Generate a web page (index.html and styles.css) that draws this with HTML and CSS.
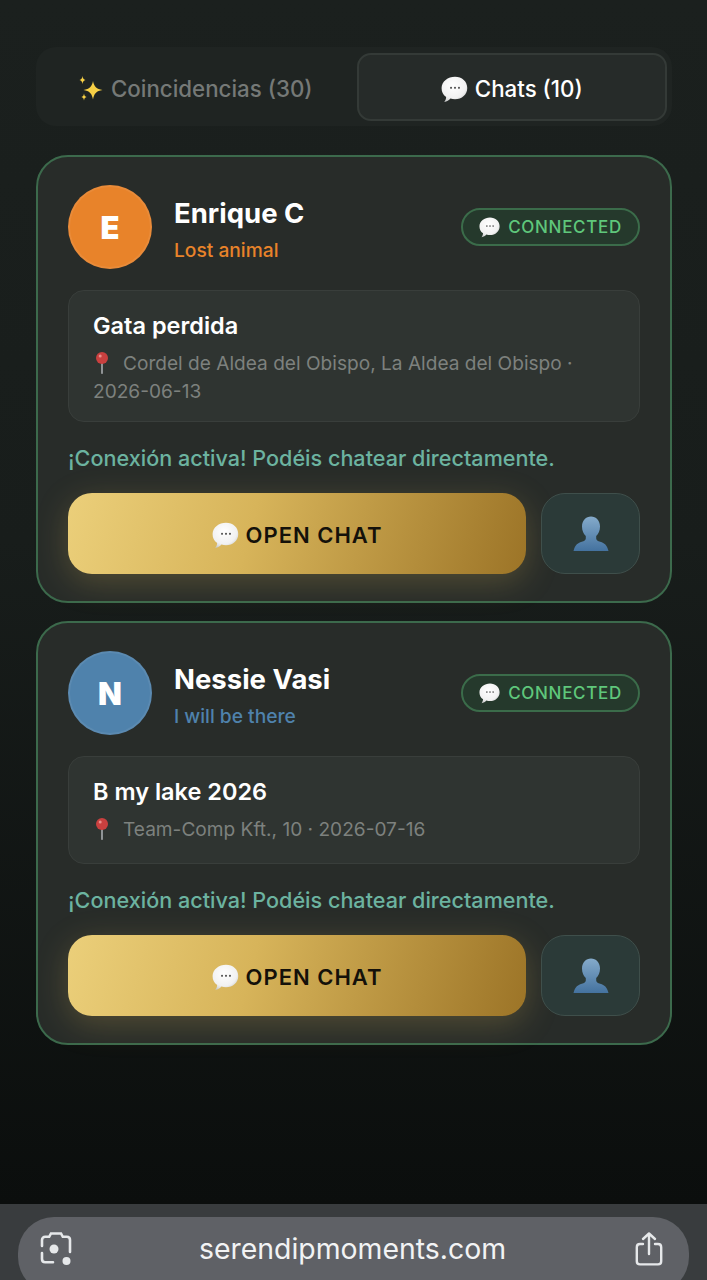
FILE: index.html
```html
<!DOCTYPE html>
<html lang="es">

<head>
  <meta charset="UTF-8">
  <meta name="viewport" content="width=device-width, initial-scale=1.0">
  <title>Chats</title>
  <link rel="stylesheet" href="styles.css">
</head>

<body>
  <svg class="defs" width="0" height="0" aria-hidden="true">
    <defs>
      <radialGradient id="bubble-fill" cx="45%" cy="35%" r="70%">
        <stop offset="0" stop-color="#ffffff" />
        <stop offset="0.7" stop-color="#f1f1f1" />
        <stop offset="1" stop-color="#c4c6c6" />
      </radialGradient>
      <linearGradient id="person-fill" x1="0" y1="0" x2="0" y2="1">
        <stop offset="0" stop-color="#85abcb" />
        <stop offset="1" stop-color="#44729f" />
      </linearGradient>
      <symbol id="bubble" viewBox="0 0 24 24">
        <path fill="url(#bubble-fill)" d="M12 1.500c6 0 10.500 4 10.500 9.700s-4.500 9.600-10.500 9.600c-1.400 0-2.700-.2-3.900-.6-1.300 1.400-3.100 2.500-5.300 3 1-1.300 1.500-2.600 1.600-4.300-2.800-1.800-3.900-4.500-3.900-7.700 0-5.700 5.500-9.700 11.500-9.700z" />
        <circle cx="8.600" cy="11" r=".9" fill="#555" />
        <circle cx="12" cy="11" r=".9" fill="#555" />
        <circle cx="15.400" cy="11" r=".9" fill="#555" />
      </symbol>
      <symbol id="sparkles" viewBox="0 0 26 28">
        <path fill="#f7d046" d="M15 6c1 5.500 3.500 8 9.500 9-6 1-8.500 3.500-9.500 9.500-1-6-3.500-8.500-9.500-9.500 6-1 8.500-3.500 9.500-9z" />
        <path fill="#f7d046" d="M4.500 1c.4 2.600 1.200 3.500 3 4-1.800.5-2.600 1.400-3 4-.4-2.600-1.200-3.500-3-4 1.800-.5 2.600-1.400 3-4z" />
        <path fill="#f7d046" d="M6 18.500c.4 2.300 1 3.100 2.600 3.500-1.600.4-2.200 1.200-2.600 3.500-.4-2.300-1-3.100-2.600-3.500 1.600-.4 2.200-1.200 2.600-3.500z" />
      </symbol>
      <symbol id="pin" viewBox="0 0 16 24">
        <rect x="7.200" y="9" width="1.600" height="14" rx=".8" fill="#a9adb0" />
        <circle cx="8" cy="7" r="6" fill="#c9403f" />
        <circle cx="6.200" cy="5" r="1.500" fill="#e98f8c" />
      </symbol>
      <symbol id="person" viewBox="0 0 36 36">
        <path fill="url(#person-fill)" d="M18 .5c5 0 9 4 9 10 0 4-1.500 7.500-3.800 9.500v2.500c0 1.500 1.500 2.500 4 3.300 4.500 1.400 6.500 3 8.300 9.200H.5c1.800-6.200 3.800-7.800 8.300-9.200 2.500-.8 4-1.800 4-3.300V20c-2.300-2-3.800-5.500-3.800-9.500 0-6 4-10 9-10z" />
      </symbol>
    </defs>
  </svg>

  <main class="page">
    <div class="tabs">
      <div class="tab">
        <svg class="tab-icon"><use href="#sparkles" /></svg>
        Coincidencias (30)
      </div>
      <div class="tab active">
        <svg class="tab-icon"><use href="#bubble" /></svg>
        Chats (10)
      </div>
    </div>

    <section class="card">
      <div class="card-head">
        <div class="avatar orange">E</div>
        <div class="who">
          <h2 class="name">Enrique C</h2>
          <p class="reason orange-text">Lost animal</p>
        </div>
        <div class="badge">
          <svg class="badge-icon"><use href="#bubble" /></svg>
          CONNECTED
        </div>
      </div>
      <div class="event">
        <h3 class="event-title">Gata perdida</h3>
        <p class="event-meta"><svg class="pin"><use href="#pin" /></svg>Cordel de Aldea del Obispo, La Aldea del Obispo · 2026-06-13</p>
      </div>
      <p class="status">¡Conexión activa! Podéis chatear directamente.</p>
      <div class="actions">
        <button class="open-chat" type="button">
          <svg class="open-icon"><use href="#bubble" /></svg>
          OPEN CHAT
        </button>
        <button class="profile" type="button" aria-label="Perfil">
          <svg class="person"><use href="#person" /></svg>
        </button>
      </div>
    </section>

    <section class="card">
      <div class="card-head">
        <div class="avatar blue">N</div>
        <div class="who">
          <h2 class="name">Nessie Vasi</h2>
          <p class="reason blue-text">I will be there</p>
        </div>
        <div class="badge">
          <svg class="badge-icon"><use href="#bubble" /></svg>
          CONNECTED
        </div>
      </div>
      <div class="event single">
        <h3 class="event-title">B my lake 2026</h3>
        <p class="event-meta"><svg class="pin"><use href="#pin" /></svg>Team-Comp Kft., 10 · 2026-07-16</p>
      </div>
      <p class="status">¡Conexión activa! Podéis chatear directamente.</p>
      <div class="actions">
        <button class="open-chat" type="button">
          <svg class="open-icon"><use href="#bubble" /></svg>
          OPEN CHAT
        </button>
        <button class="profile" type="button" aria-label="Perfil">
          <svg class="person"><use href="#person" /></svg>
        </button>
      </div>
    </section>
  </main>

  <footer class="browser-bar">
    <div class="url-pill">
      <svg class="bar-icon" viewBox="0 0 34 36" fill="none" stroke="#e6e8ea" stroke-width="2.600" stroke-linecap="round">
        <path d="M3 15V9c0-2 1.400-3.200 3.200-3.200h4L12 2.500h10l1.800 3.300h4c1.800 0 3.200 1.200 3.200 3.200v12" />
        <path d="M3 22v6c0 2 1.400 3.200 3.200 3.200H14" />
        <circle cx="15" cy="18" r="4.500" fill="#e6e8ea" stroke="none" />
        <circle cx="27.500" cy="30" r="4" fill="#e6e8ea" stroke="none" />
      </svg>
      <span class="url">serendipmoments.com</span>
      <svg class="bar-icon" viewBox="0 0 34 36" fill="none" stroke="#e6e8ea" stroke-width="2.400" stroke-linecap="round" stroke-linejoin="round">
        <path d="M11 13H8c-2 0-3.200 1.200-3.200 3.200v14c0 2 1.200 3.200 3.200 3.200h18c2 0 3.200-1.200 3.200-3.200v-14c0-2-1.200-3.200-3.200-3.200h-3" />
        <path d="M17 23V2.500M11 8l6-5.500L23 8" />
      </svg>
    </div>
  </footer>
</body>

</html>
```

FILE: styles.css
```css
* {
  box-sizing: border-box;
}

html,
body {
  height: 100%;
}

body {
  margin: 0;
  height: 1280px;
  overflow: hidden;
  display: flex;
  flex-direction: column;
  font-family: "Inter", "Liberation Sans", sans-serif;
  background: #0b0e0d;
  color: #fff;
}

h2,
h3,
p {
  margin: 0;
}

.defs {
  position: absolute;
}

.page {
  flex: 1;
  display: flex;
  flex-direction: column;
  gap: 18px;
  padding: 47px 35px 0 36px;
  background: linear-gradient(180deg, #1b201e 0%, #181d1b 45%, #0b0e0d 100%);
}

/* tabs */
.tabs {
  display: grid;
  grid-template-columns: 1fr 1fr;
  gap: 4px;
  height: 79px;
  padding: 6px 5px 5px 6px;
  margin-bottom: 11px;
  background: #1f2422;
  border-radius: 20px;
}

.tab {
  display: flex;
  align-items: center;
  justify-content: center;
  gap: 6px;
  padding: 3px 5px 0 0;
  font-size: 22.300px;
  font-weight: 500;
  color: #757977;
  border: 2px solid transparent;
  border-radius: 14px;
}

.tab.active {
  padding-right: 0;
  color: #fff;
  background: #262b29;
  border-color: #343a37;
}

.tab-icon {
  width: 28px;
  height: 28px;
}

/* card */
.card {
  display: flex;
  flex-direction: column;
  padding: 28px 30px 27px;
  background: #282c29;
  border: 2px solid #3c6a4c;
  border-radius: 32px;
}

.card-head {
  display: flex;
  align-items: center;
  gap: 22px;
  margin-bottom: 21px;
}

.avatar {
  flex-shrink: 0;
  width: 84px;
  height: 84px;
  display: flex;
  align-items: center;
  justify-content: center;
  border: 2px solid rgba(255, 255, 255, 0.07);
  border-radius: 50%;
  font-size: 31px;
  font-weight: 900;
}

.orange {
  background: #e8832a;
}

.blue {
  background: #4f82ac;
}

.who {
  flex: 1;
  padding-top: 4px;
}

.name {
  font-size: 27.500px;
  line-height: 34px;
  font-weight: 700;
}

.reason {
  margin-top: 8px;
  font-size: 19.200px;
  line-height: 24px;
  font-weight: 500;
}

.orange-text {
  color: #e8832a;
}

.blue-text {
  color: #4f82ac;
}

.badge {
  display: flex;
  align-items: center;
  gap: 7px;
  height: 38px;
  padding: 0 16px;
  font-size: 17px;
  font-weight: 500;
  letter-spacing: 0.700px;
  color: #5fc77b;
  background: #25392c;
  border: 2px solid #3b6c4a;
  border-radius: 19px;
}

.badge-icon {
  width: 22px;
  height: 22px;
}

/* event box */
.event {
  padding: 20px 24px 16px;
  background: #2f3431;
  border: 1.500px solid #393e3b;
  border-radius: 16px;
}

.event.single {
  padding-bottom: 20px;
}

.event-title {
  font-size: 23.500px;
  line-height: 30px;
  font-weight: 600;
}

.event-meta {
  margin-top: 8px;
  font-size: 19.100px;
  line-height: 28px;
  color: #7d817e;
}

.pin {
  width: 18px;
  height: 24px;
  margin-right: 12px;
  vertical-align: -5px;
}

.status {
  margin: 21px 0 20px;
  font-size: 21.600px;
  line-height: 30px;
  font-weight: 500;
  color: #6cb3a0;
}

/* buttons */
.actions {
  display: flex;
  gap: 15px;
}

.open-chat {
  flex: 1;
  height: 81px;
  display: flex;
  align-items: center;
  justify-content: center;
  gap: 6px;
  padding-top: 4px;
  font-family: inherit;
  font-size: 22px;
  font-weight: 600;
  letter-spacing: 1px;
  color: #14110a;
  background: linear-gradient(105deg, #ebcf7a 0%, #d7b45a 40%, #9c7427 100%);
  border: 0;
  border-radius: 24px;
  box-shadow: 0 8px 32px rgba(212, 175, 85, 0.25);
}

.open-icon {
  width: 28px;
  height: 28px;
}

.profile {
  width: 99px;
  height: 81px;
  display: flex;
  align-items: center;
  justify-content: center;
  background: #2b3a38;
  border: 1.500px solid #3f4f4b;
  border-radius: 24px;
}

.person {
  width: 36px;
  height: 36px;
}

/* safari bar */
.browser-bar {
  flex-shrink: 0;
  height: 76px;
  overflow: hidden;
  padding: 13px 18px 0;
  background: #393c3e;
}

.url-pill {
  height: 76px;
  display: flex;
  justify-content: space-between;
  padding: 14px 23px 0 21px;
  background: #5f6166;
  border-radius: 36px;
}

.bar-icon {
  width: 34px;
  height: 36px;
}

.url {
  font-size: 28.400px;
  line-height: 36px;
  color: #f2f3f4;
}
```
